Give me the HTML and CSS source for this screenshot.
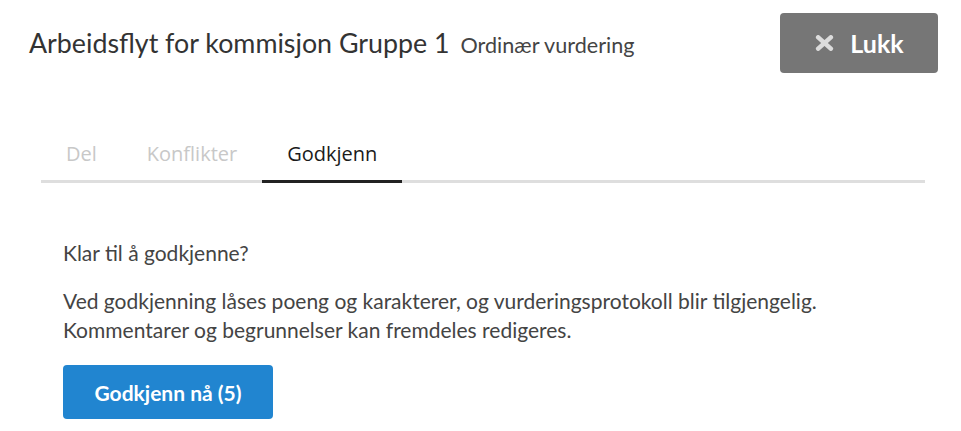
FILE: index.html
```html
<!DOCTYPE html>
<html lang="no">
<head>
<meta charset="utf-8">
<link rel="stylesheet" href="styles.css">
</head>
<body>
<div class="page">
  <header class="header">
    <h1 class="title">Arbeidsflyt for kommisjon Gruppe 1 <span class="subtitle">Ordinær vurdering</span></h1>
    <button class="close-btn">
      <svg class="close-icon" viewBox="0 0 19 16" width="19" height="16" aria-hidden="true">
        <path d="M3.2 2.4 L15.8 13.6 M15.8 2.4 L3.2 13.6" stroke="#dcdcdc" stroke-width="4.6" stroke-linecap="round" fill="none"/>
      </svg>
      <span>Lukk</span>
    </button>
  </header>
  <nav class="tabs">
    <div class="tab disabled">Del</div>
    <div class="tab disabled">Konflikter</div>
    <div class="tab active">Godkjenn</div>
  </nav>
  <section class="content">
    <p class="question">Klar til å godkjenne?</p>
    <p class="desc">Ved godkjenning låses poeng og karakterer, og vurderingsprotokoll blir tilgjengelig.<br>Kommentarer og begrunnelser kan fremdeles redigeres.</p>
    <button class="approve-btn">Godkjenn nå (5)</button>
  </section>
</div>
</body>
</html>
```
FILE: styles.css
```css
* { box-sizing: border-box; }
html, body { margin: 0; padding: 0; background: #fff; }
body { font-family: Lato, "Liberation Sans", sans-serif; color: #333; }
.page { padding: 13px 23px 0 29px; }
.header { display: flex; justify-content: space-between; align-items: flex-start; }
.title { margin: 15px 0 0; font-weight: 400; font-size: 26.8px; color: #333; line-height: 30px; }
.subtitle { font-size: 21.6px; color: #444; margin-left: 4px; }
.close-btn {
  width: 158px; height: 60px; background: #767676; border: none; border-radius: 4px;
  display: flex; align-items: center; justify-content: center; gap: 16px;
  color: #fff; font-family: Lato, sans-serif; font-weight: 700; font-size: 25px; padding: 0 0 0 1px;
}
.close-icon { display: block; }
.tabs { display: flex; margin: 55px 0 0 12px; border-bottom: 3px solid #dedede; width: 884px; }
.tab {
  font-family: "Open Sans", "Noto Sans", sans-serif; font-size: 20px; line-height: 28px;
  padding: 12px 25px; margin-bottom: -3px; border-bottom: 3px solid transparent;
}
.tab.disabled { color: #c8c8c8; }
.tab.active { color: #1b1b1b; border-bottom-color: #222; }
.content { padding: 55px 0 0 34px; font-size: 21px; color: #444; }
.question { margin: 0 0 19px; line-height: 29px; }
.desc { margin: 0 0 21px; line-height: 29px; }
.approve-btn {
  width: 210px; height: 54px; background: #2185d0; color: #fff; border: none; border-radius: 4px;
  font-family: Lato, sans-serif; font-weight: 700; font-size: 21px; display: block;
}
```
